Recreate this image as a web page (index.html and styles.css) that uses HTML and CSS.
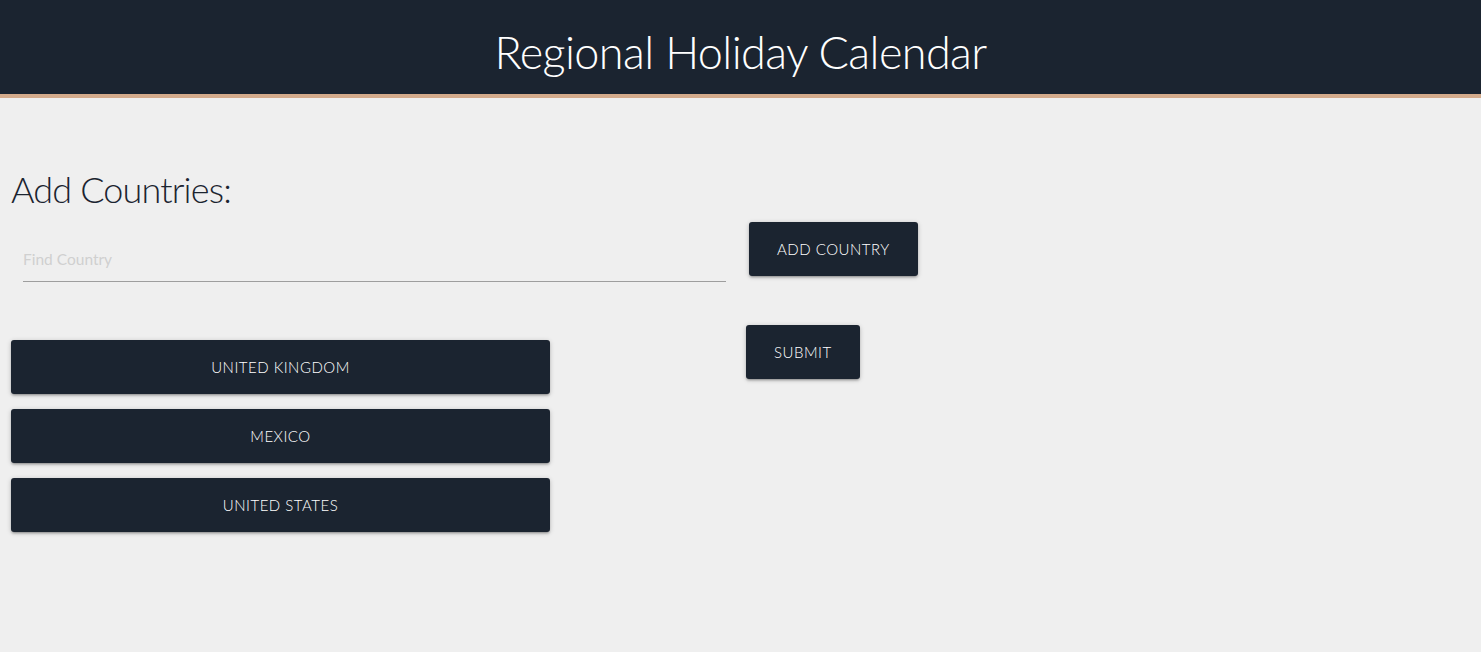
FILE: index.html
```html
<!DOCTYPE html>
<html lang="en">
<head>
<meta charset="utf-8">
<title>Regional Holiday Calendar</title>
<link rel="stylesheet" href="styles.css">
</head>
<body>
<header class="site-header">
  <h1 class="site-title">Regional Holiday Calendar</h1>
</header>
<main class="main">
  <h2 class="section-title">Add Countries:</h2>
  <div class="layout">
    <div class="field">
      <input class="field-input" type="text" placeholder="Find Country">
    </div>
    <div class="actions-top">
      <button class="btn btn-add" type="button">Add Country</button>
    </div>
    <div class="country-list">
      <button class="btn btn-country" type="button">United Kingdom</button>
      <button class="btn btn-country" type="button">Mexico</button>
      <button class="btn btn-country" type="button">United States</button>
    </div>
    <div class="actions-bottom">
      <button class="btn btn-submit" type="button">Submit</button>
    </div>
  </div>
</main>
</body>
</html>
```

FILE: styles.css
```css
* { box-sizing: border-box; }

html, body {
  margin: 0;
  padding: 0;
}

body {
  background: #efefef;
  font-family: Lato, "Noto Sans", sans-serif;
  color: #1b2430;
  min-height: 652px;
}

.site-header {
  background: #1b2430;
  height: 98px;
  border-bottom: 4px solid #d3aa8b;
  padding-top: 10px;
}

.site-title {
  margin: 0;
  text-align: center;
  font-weight: 300;
  font-size: 45px;
  letter-spacing: -0.6px;
  line-height: 85px;
  color: #ffffff;
}

.main {
  padding: 0 11px;
}

.section-title {
  margin: 68px 0 0 0;
  font-weight: 300;
  font-size: 36px;
  letter-spacing: -0.85px;
  line-height: 46px;
  color: #1b2430;
}

.layout {
  display: grid;
  grid-template-columns: 735px auto;
  align-items: start;
}

.field {
  margin: 22px 0 0 12px;
  width: 703px;
}

.field-input {
  display: block;
  width: 100%;
  height: 48px;
  border: none;
  border-bottom: 1px solid #9e9e9e;
  background: transparent;
  outline: none;
  padding: 3px 0 0 0;
  font-family: Lato, "Noto Sans", sans-serif;
  font-size: 15.5px;
  color: #1b2430;
}

.field-input::placeholder {
  color: #d0d0d0;
}

.actions-top {
  margin: 10px 0 0 3px;
}

.btn {
  display: block;
  border: none;
  background: #1b2430;
  color: #ffffff;
  font-family: Lato, "Noto Sans", sans-serif;
  font-weight: 300;
  font-size: 15px;
  letter-spacing: 0.5px;
  text-transform: uppercase;
  height: 54px;
  line-height: 54px;
  padding: 0 28px;
  border-radius: 3px;
  box-shadow: 0 2px 2px 0 rgba(0,0,0,0.14), 0 3px 1px -2px rgba(0,0,0,0.12), 0 1px 5px 0 rgba(0,0,0,0.2);
  cursor: pointer;
}

.country-list {
  margin-top: 58px;
  width: 539px;
  display: flex;
  flex-direction: column;
  gap: 15px;
}

.btn-country {
  width: 100%;
  text-align: center;
}

.actions-bottom {
  margin-top: 43px;
}
```
